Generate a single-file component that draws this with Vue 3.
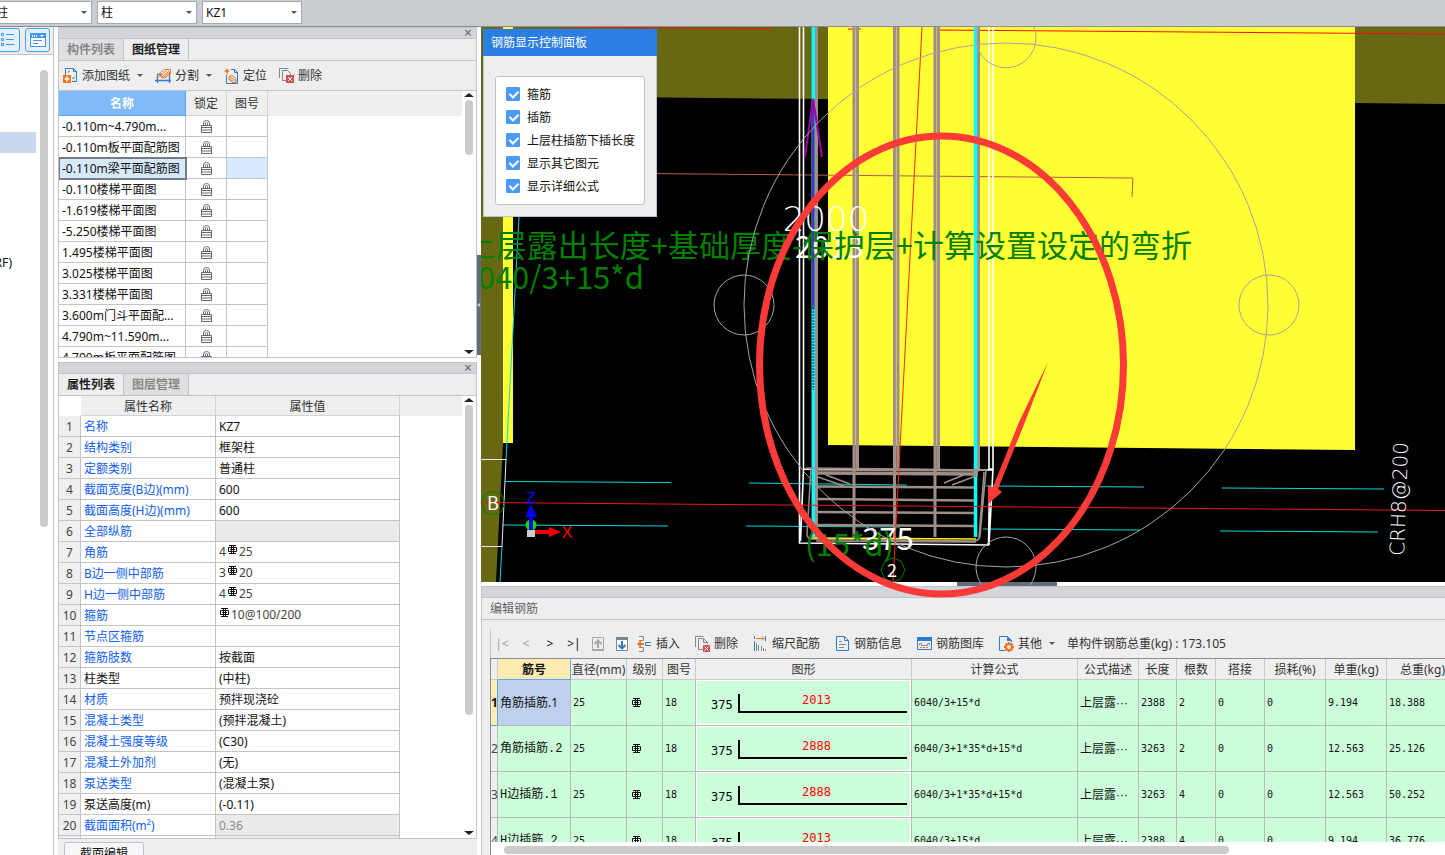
<template>
    <div class="app">
        <header class="topbar">
            <div class="combo" v-for="c in combos" :key="c.label">
                <select :aria-label="c.label">
                    <option>{{ c.value }}</option>
                </select>
                <i class="caret"></i>
            </div>
        </header>
        <div class="main">
            <aside class="sidebar">
                <div class="side-tools">
                    <button class="side-btn" aria-label="列表">
                        <svg width="14" height="14" viewBox="0 0 14 14" fill="none" stroke="#3f97ee">
                            <path d="M.5 .5h2v2h-2zM.5 5.5h2v2h-2zM.5 10.5h2v2h-2zM5 1.5h8M5 6.5h8M5 11.5h8" />
                        </svg>
                    </button>
                    <button class="side-btn" aria-label="视图">
                        <svg width="16" height="14" viewBox="0 0 16 14">
                            <path fill="#3f97ee" d="M0 0h16v14H0z" />
                            <path fill="#fff" d="M2 2h1v2H2zM4 2h1v2H4zM6 2h1v2H6zM10 2h4l-2 2zM1 5h14v8H1z" />
                            <path fill="#3f97ee" d="M3 7h9v1H3zM3 10h5v1H3z" />
                        </svg>
                    </button>
                </div>
                <div class="tree-box">
                    <div class="tree">
                        <div class="tree-active"></div>
                        <div class="tree-item">(RF)</div>
                    </div>
                    <div class="thumb side-thumb"></div>
                </div>
            </aside>

            <section class="left">
                <div class="panel drawings">
                    <div class="grip"><button class="close" aria-label="关闭">×</button></div>
                    <div class="tabs">
                        <button class="tab">构件列表</button>
                        <button class="tab on">图纸管理</button>
                    </div>
                    <div class="tools">
                        <button class="tool">
                            <svg width="15" height="15" viewBox="0 0 15 15" fill="none">
                                <path stroke="#2f7bd0" d="M2.500 7V.5h8l3 3v10H9M10.500.5v3h3" />
                                <path stroke="#8a949c" d="M5 5V3.500h2M11 8.500v2H9" />
                                <path fill="#ee7420" d="M0 7h8v8H0z" />
                                <path stroke="#fff" stroke-width="1.500" d="M4 8.500v5M1.500 11h5" />
                            </svg>添加图纸<i class="caret"></i>
                        </button>
                        <button class="tool">
                            <svg width="16" height="15" viewBox="0 0 16 15" fill="none">
                                <path stroke="#2f7bd0" stroke-width="1.300" d="M2.500 7v8M14.500 5v10M0 12.500h16M2 6.500h5" />
                                <path stroke="#ee7420" d="M1.500 9.500l4-5 4-3h6v4l-6 5M4 9l7-6M6 10l8-7M8 10l7-6M5 8l3 2" />
                            </svg>分割<i class="caret"></i>
                        </button>
                        <button class="tool">
                            <svg width="15" height="16" viewBox="0 0 15 16" fill="none">
                                <path stroke="#2f7bd0" d="M2.500 7v8.500h11V4.500l-3-3H7M10.500 1.500v3h3" />
                                <path fill="#ee7420" d="M3 0l1 2 2 1-2 1-1 3-1-3-2-1 2-1z" />
                                <path stroke="#ee7420" d="M5 8.500l3-1 4 3v4H8l-3-3zM6 9l6 4M5 11l4 2" />
                            </svg>定位
                        </button>
                        <button class="tool">
                            <svg width="15" height="15" viewBox="0 0 15 15" fill="none">
                                <path stroke="#808a93" d="M.5 10V.5h9M3.500 12.500v-10h5l3 3V7M3.500 12.500H7" />
                                <path fill="#d55252" d="M7 7h8v8H7z" />
                                <path stroke="#fff" d="M9 9l4 4M13 9l-4 4" />
                            </svg>删除
                        </button>
                    </div>
                    <div class="scroll-area">
                        <div class="grid-box">
                            <table class="grid draw-grid">
                                <colgroup><col class="c-name"><col class="c-lock"><col class="c-lock"></colgroup>
                                <thead>
                                    <tr><th class="sorted">名称</th><th>锁定</th><th>图号</th></tr>
                                </thead>
                                <tbody>
                                    <tr v-for="(d, i) in drawings" :key="d" :class="{ picked: i === 2 }">
                                        <td>{{ d }}</td>
                                        <td class="lock">
                                            <svg width="11" height="13" viewBox="0 0 11 13" fill="none" stroke="#666a70">
                                                <path d="M2.500 5V3q0-2.500 3-2.500T8.500 3v2M4.500 5V3.500q0-1 1-1t1 1V5" />
                                                <path d="M.5 5.500h10v7H.5zM1 7.500h9M1 10h9" />
                                            </svg>
                                        </td>
                                        <td></td>
                                    </tr>
                                </tbody>
                            </table>
                        </div>
                        <div class="vbar">
                            <i class="up"></i>
                            <div class="thumb short"></div>
                            <i class="down"></i>
                        </div>
                    </div>
                </div>

                <div class="panel props">
                    <div class="grip"><button class="close" aria-label="关闭">×</button></div>
                    <div class="tabs">
                        <button class="tab on">属性列表</button>
                        <button class="tab">图层管理</button>
                    </div>
                    <div class="scroll-area">
                        <div class="grid-box">
                            <table class="grid prop-grid">
                                <colgroup><col class="c-no"><col class="c-key"><col class="c-val"></colgroup>
                                <thead>
                                    <tr><th class="corner"></th><th>属性名称</th><th>属性值</th></tr>
                                </thead>
                                <tbody>
                                    <tr v-for="(p, i) in props" :key="i">
                                        <td class="no">{{ p[0] ? i + 1 : '' }}</td>
                                        <td :class="p[2] === 'plain' ? '' : 'link'">{{ p[0] }}</td>
                                        <td :class="p[2]">
                                            <span v-if="p[2] === 'bar'" class="rebar">{{ p[1][0] }}<svg width="11" height="10" viewBox="0 0 11 10" fill="none" stroke="#111">
                                                <path d="M4.500 0v9M6.500 0v9M2 .5h7M2 8.500h7M1.500 2.500h8v4h-8zM3 4.500h5" />
                                            </svg>{{ p[1][1] }}</span>
                                            <template v-else>{{ p[1] }}</template>
                                        </td>
                                    </tr>
                                </tbody>
                            </table>
                        </div>
                        <div class="vbar">
                            <i class="up"></i>
                            <div class="thumb long"></div>
                            <i class="down"></i>
                        </div>
                    </div>
                </div>
                <div class="foot"><button class="foot-btn">截面编辑</button></div>
            </section>

            <div class="vsplit"><div class="vsplit-handle"><i></i></div></div>

            <section class="right">
                <div class="canvas">
                    <svg class="cad" viewBox="481 27 964 555" preserveAspectRatio="xMinYMin slice" fill="none">
                        <!-- slabs -->
                        <path fill="#686814" d="M481 27h347v72L503 96v347l-7 139h-15zM1355 27h90v77l-90-1z" />
                        <path fill="#ffff33" d="M503 27h10v416h-10zM828 27h527v423l-527-5z" />
                        <!-- axis lines -->
                        <path stroke="#f01010" d="M560 27l212 2M848 29h13M937 30l508 4" />
                        <path stroke="#b85a50" d="M481 172l652 6-1 19" />
                        <path stroke="#00d8dc" d="M519 217l-13 243M502 546l-2 36M505 481.500l166 1M503 525l165 1M749 483l158 2M746 526l154 1M986 486l158 1M983 529l157 1M1222 488l162 1M1220 531l158 1" />
                        <path stroke="#e8e8e8" d="M481 459.500h25l-4 87h-21" />
                        <!-- column outline -->
                        <path stroke="#fff" stroke-width="1.600" d="M799.500 27v516l189 2 1-59M803.500 27v442l-3 72M989 27v442h4M993 27v442l-4 76M803 469l190 1" />
                        <!-- main bars -->
                        <path stroke="#9f8d87" stroke-width="3" d="M816.500 27v512M854 27v510M857.500 27v442M894.500 27v512M898 27v442M935 27v510M938.500 27v442M978.500 27v442" />
                        <path stroke="#c9b59a" stroke-width=".6" d="M855.700 27v442M896.200 27v442M936.700 27v442" />
                        <path stroke="#00ffff" stroke-width="3.500" d="M813.300 27v510M975.500 27v510" />
                        <path stroke="#5a28b0" stroke-width="2.500" d="M813.300 99v210" />
                        <path stroke="#286ab4" stroke-width="2" stroke-dasharray="2 1" d="M813.300 305v85" />
                        <!-- stirrups -->
                        <path stroke="#9f8d87" stroke-width="3.500" d="M816 473l162 1" />
                        <path stroke="#9f8d87" stroke-width="2.500" d="M816 486.500l158 1M816 499l158 1.500M816 512l158 1M816 525l158 1" />
                        <path stroke="#9f8d87" stroke-width="1.500" d="M806 468l180 2-6 66q-1 5-6 5l-163-2q-4-1-4-5l4-66M818 477l26 9M826 475l24 9M944 483l22-9M952 485l24-9M984 472l-5 66M817 470l162 1M816 541l160 1" />
                        <path stroke="#ffee22" stroke-width="1.500" d="M811 538l165 1" />
                        <path stroke="#a000a8" stroke-width="2" d="M805 157l8-58 9 58" />
                        <path stroke="#e81818" d="M481 502.500l964 8" />
                        <path stroke="#ff2810" d="M922 27l-29 555" />
                        <!-- labels -->
                        <text class="thin" x="826" y="231" text-anchor="middle">2000</text>
                        <text class="cad-text white" x="795" y="258">2013</text>
                        <text class="cad-text green" x="1192" y="257" text-anchor="end">上层露出长度+基础厚度-保护层+计算设置设定的弯折</text>
                        <text class="cad-text green" x="644" y="289" text-anchor="end">6040/3+15*d</text>
                        <text class="cad-text white" x="862" y="550">375</text>
                        <text class="cad-text green" x="805" y="556">(15*d)</text>
                        <text class="thin vert" transform="translate(1404 556) rotate(-88)">CRH8@200</text>
                        <!-- grid bubbles -->
                        <path stroke="#008000" d="M493 491l8 3 4 9-4 9-8 3-8-3-4-9 4-9zM893 558l8 3 4 9-4 9-8 3-8-3-4-9 4-9z" />
                        <text class="bubble" x="493" y="510" text-anchor="middle">B</text>
                        <text class="bubble" x="892" y="577" text-anchor="middle">2</text>
                        <!-- axis gizmo -->
                        <circle cx="531" cy="525" r="5.500" fill="#00e000" />
                        <path fill="#0000f0" d="M531 504l6 13h-4v13h-4v-13h-4z" />
                        <path fill="#f00000" d="M561 532l-12 5v-3h-15v-4h15v-3z" />
                        <path fill="#ccc" d="M527 530h8v7h-8z" />
                        <text class="axis blue" x="531" y="504" text-anchor="middle">Z</text>
                        <text class="axis red" x="567" y="538" text-anchor="middle">X</text>
                    </svg>
                    <svg class="cad over" viewBox="481 27 964 555" preserveAspectRatio="xMinYMin slice" fill="none">
                        <g stroke="#a4a4a4">
                            <circle cx="1006" cy="305" r="262" />
                            <circle cx="744" cy="305" r="30" />
                            <circle cx="1269" cy="305" r="30" />
                            <path d="M978 27a30 30 0 1 0 56 0" />
                            <path d="M982 585a30 30 0 1 1 48 0" />
                        </g>
                        <ellipse cx="941.500" cy="365" rx="182" ry="229" stroke="#fc3a38" stroke-width="7" />
                        <path fill="#fc3a38" d="M1048 362l-29 60-26 65-5-1v18l14-12-4-3 27-67z" />
                    </svg>
                    <div class="dialog">
                        <div class="dialog-title">钢筋显示控制面板</div>
                        <div class="dialog-body">
                            <div class="checks">
                                <label v-for="c in checks" :key="c.label"><input type="checkbox" v-model="c.on">{{ c.label }}</label>
                            </div>
                        </div>
                    </div>
                </div>

                <div class="hsplit"><div class="hsplit-handle"></div></div>

                <div class="editor">
                    <div class="grip"></div>
                    <div class="editor-title">编辑钢筋</div>
                    <div class="editor-tools">
                        <button class="nav dim">|&lt;</button>
                        <button class="nav dim">&lt;</button>
                        <button class="nav">&gt;</button>
                        <button class="nav">&gt;|</button>
                        <button class="nav" aria-label="上移">
                            <svg width="12" height="14" viewBox="0 0 12 14" fill="none" stroke="#a9a9a9">
                                <path d="M.5 .5h11v13H.5zM0 12.500h12" /><path stroke-width="2" d="M6 11V4M2.500 7L6 3.500 9.500 7" />
                            </svg>
                        </button>
                        <button class="nav" aria-label="下移">
                            <svg width="12" height="14" viewBox="0 0 12 14" fill="none">
                                <path fill="#fff" stroke="#7b858f" d="M.5 .5h11v13H.5z" />
                                <path fill="#7b858f" d="M0 0h12v3H0z" />
                                <path stroke="#2f7bd0" stroke-width="2" d="M6 4v7M2.500 8L6 11.500 9.500 8" />
                            </svg>
                        </button>
                        <div class="editor-btns">
                            <button class="tool">
                                <svg width="15" height="16" viewBox="0 0 15 16" fill="none">
                                    <path stroke="#808a93" d="M2 .5h4.500v4H2M2 15.500h4.500v-4H2" />
                                    <path stroke="#2f7bd0" d="M14 6.500H8.500v3H14" />
                                    <path fill="#ee7420" d="M0 8l4-4v3h3v2H4v3z" />
                                </svg>插入
                            </button>
                            <button class="tool">
                                <svg width="15" height="16" viewBox="0 0 15 16" fill="none">
                                    <path stroke="#808a93" d="M.5 11V.5h8M3.500 13.500v-11h5l4 4V8M3.500 13.500H8M8.500 3v3.500h4" />
                                    <path fill="#d55252" d="M8 9h7v7H8z" />
                                    <path stroke="#fff" d="M9.500 10.500l4 4M13.500 10.500l-4 4" />
                                </svg>删除
                            </button>
                            <button class="tool">
                                <svg width="15" height="16" viewBox="0 0 15 16" fill="none">
                                    <path stroke="#2f7bd0" d="M1.500 0v3M1.500 5v10M12.500 0v5" />
                                    <path stroke="#ee7420" d="M3 2.500h8M9 .5l2 2-2 2" />
                                    <path stroke="#808a93" d="M3.500 7v8M5.500 9v6M8.500 10v5M10.500 12v3M12.500 13v2" />
                                </svg>缩尺配筋
                            </button>
                            <button class="tool">
                                <svg width="15" height="16" viewBox="0 0 15 16" fill="none">
                                    <path stroke="#2f7bd0" d="M1.500 .5h8l4 4v10h-12zM9.500 .5v4h4" />
                                    <path stroke="#808a93" d="M4 5.500h3M4 8.500h7M4 11.500h5" />
                                </svg>钢筋信息
                            </button>
                            <button class="tool">
                                <svg width="15" height="14" viewBox="0 0 15 14" fill="none">
                                    <path stroke="#2f7bd0" d="M.5 .5h14v12H.5z" />
                                    <path fill="#2f7bd0" d="M0 0h15v4H0z" />
                                    <path stroke="#808a93" d="M2.500 8.500v-2h2v2h6v-2h2v2" />
                                    <path stroke="#ee7420" stroke-dasharray="2 1" d="M3 10.500h9" />
                                </svg>钢筋图库
                            </button>
                            <button class="tool">
                                <svg width="15" height="16" viewBox="0 0 15 16" fill="none">
                                    <path stroke="#2f7bd0" d="M6 14.500H.5V.5h8l4 4V6" />
                                    <path fill="#2f7bd0" d="M8 0l5 5H8z" />
                                    <circle cx="10" cy="11" r="3" stroke="#ee7420" stroke-width="2" />
                                    <path stroke="#ee7420" stroke-width="2" d="M10 6v2M10 14v2M5 11h2M13 11h2M6.500 7.500L8 9M12 13l1.500 1.500M13.500 7.500L12 9M8 13l-1.500 1.500" />
                                </svg>其他<i class="caret"></i>
                            </button>
                            <span class="total">单构件钢筋总重(kg) : 173.105</span>
                        </div>
                    </div>
                    <div class="sheet-box">
                        <div class="sheet-clip">
                            <table class="sheet">
                                <colgroup><col v-for="(w, i) in widths" :key="i" :style="{ width: w + 'px' }"></colgroup>
                                <thead>
                                    <tr>
                                        <th v-for="(h, i) in heads" :key="i" :class="{ current: i === 1 }">{{ h }}</th>
                                    </tr>
                                </thead>
                                <tbody>
                                    <tr v-for="(r, i) in rows" :key="i" :class="{ active: i === 0 }">
                                        <td class="idx">{{ i + 1 }}</td>
                                        <td class="bar-name">{{ r.name }}</td>
                                        <td>25</td>
                                        <td>
                                            <svg width="11" height="10" viewBox="0 0 11 10" fill="none" stroke="#111">
                                                <path d="M4.500 0v9M6.500 0v9M2 .5h7M2 8.500h7M1.500 2.500h8v4h-8zM3 4.500h5" />
                                            </svg>
                                        </td>
                                        <td>18</td>
                                        <td class="shape">
                                            <svg width="215" height="45" viewBox="0 0 213 43">
                                                <path fill="none" stroke="#000" stroke-width="2" d="M42 13v18h168" />
                                                <text x="14" y="28">375</text>
                                                <text class="len" x="105" y="23">{{ r.bend }}</text>
                                            </svg>
                                        </td>
                                        <td>{{ r.formula }}</td>
                                        <td class="desc">上层露···</td>
                                        <td>{{ r.len }}</td>
                                        <td>{{ r.n }}</td>
                                        <td>0</td>
                                        <td>0</td>
                                        <td>{{ r.unit }}</td>
                                        <td>{{ r.sum }}</td>
                                    </tr>
                                </tbody>
                            </table>
                        </div>
                        <div class="hbar"><div class="thumb hthumb"></div></div>
                    </div>
                </div>
            </section>
        </div>
    </div>
</template>

<script setup>
    import { ref } from 'vue';

    const combos = [
        { label: '构件大类', value: '柱' },
        { label: '构件类型', value: '柱' },
        { label: '构件', value: 'KZ1' },
    ]

    const drawings = [
        '-0.110m~4.790m...', '-0.110m板平面配筋图', '-0.110m梁平面配筋图', '-0.110楼梯平面图',
        '-1.619楼梯平面图', '-5.250楼梯平面图', '1.495楼梯平面图', '3.025楼梯平面图',
        '3.331楼梯平面图', '3.600m门斗平面配...', '4.790m~11.590m...', '4.790m板平面配筋图',
    ]

    // [属性名称, 属性值, 样式]
    const props = [
        ['名称', 'KZ7'],
        ['结构类别', '框架柱'],
        ['定额类别', '普通柱'],
        ['截面宽度(B边)(mm)', '600'],
        ['截面高度(H边)(mm)', '600'],
        ['全部纵筋', '', 'off'],
        ['角筋', ['4', '25'], 'bar'],
        ['B边一侧中部筋', ['3', '20'], 'bar'],
        ['H边一侧中部筋', ['4', '25'], 'bar'],
        ['箍筋', ['', '10@100/200'], 'bar'],
        ['节点区箍筋', ''],
        ['箍筋肢数', '按截面'],
        ['柱类型', '(中柱)', 'plain'],
        ['材质', '预拌现浇砼'],
        ['混凝土类型', '(预拌混凝土)'],
        ['混凝土强度等级', '(C30)'],
        ['混凝土外加剂', '(无)'],
        ['泵送类型', '(混凝土泵)'],
        ['泵送高度(m)', '(-0.11)', 'plain'],
        ['截面面积(m²)', '0.36', 'off'],
        ['', '', 'off'],
    ]

    const checks = ref([
        { label: '箍筋', on: true },
        { label: '插筋', on: true },
        { label: '上层柱插筋下插长度', on: true },
        { label: '显示其它图元', on: true },
        { label: '显示详细公式', on: true },
    ])

    const heads = ['', '筋号', '直径(mm)', '级别', '图号', '图形', '计算公式', '公式描述', '长度', '根数', '搭接', '损耗(%)', '单重(kg)', '总重(kg)']
    const widths = [7, 73, 56, 36, 33, 216, 166, 61, 38, 39, 49, 61, 61, 72]
    const rows = [
        { name: '角筋插筋.1', bend: 2013, formula: '6040/3+15*d', len: 2388, n: 2, unit: '9.194', sum: '18.388' },
        { name: '角筋插筋.2', bend: 2888, formula: '6040/3+1*35*d+15*d', len: 3263, n: 2, unit: '12.563', sum: '25.126' },
        { name: 'H边插筋.1', bend: 2888, formula: '6040/3+1*35*d+15*d', len: 3263, n: 4, unit: '12.563', sum: '50.252' },
        { name: 'H边插筋.2', bend: 2013, formula: '6040/3+15*d', len: 2388, n: 4, unit: '9.194', sum: '36.776' },
    ]
</script>

<style>
    body {
        margin: 0;
        overflow: hidden;
    }
</style>

<style scoped>
    * {
        box-sizing: border-box;
    }

    .app {
        height: 100vh;
        display: flex;
        flex-direction: column;
        overflow: hidden;
        background: #fff;
        color: #111;
        font: 12px/16px "Noto Sans", "Noto Sans CJK SC", sans-serif;
    }

    button, select, input {
        font: inherit;
        color: inherit;
        margin: 0;
        padding: 0;
        border: 0;
        background: none;
    }

    svg {
        flex: none;
    }

    .caret {
        border: 3px solid transparent;
        border-top-color: #555;
        border-bottom: 0;
    }

    /* 顶部 */
    .topbar {
        flex: none;
        height: 27px;
        display: flex;
        gap: 5px;
        padding: 1px 0;
        background: #c9ccd1;
        border-bottom: 1px solid #8b8e96;
    }

    .combo {
        position: relative;
        width: 100px;
        height: 23px;
    }

    .combo:first-child {
        margin-left: -8px;
    }

    .combo select {
        appearance: none;
        width: 100%;
        height: 100%;
        padding: 0 3px;
        border: 1px solid #a5a8ad;
        background: #fff;
    }

    .combo .caret {
        position: absolute;
        right: 5px;
        top: 10px;
    }

    .main {
        flex: 1;
        min-height: 0;
        display: flex;
    }

    /* 侧栏 */
    .sidebar {
        flex: none;
        width: 54px;
        display: flex;
        flex-direction: column;
        overflow: hidden;
        border-right: 1px solid #c2c4ca;
    }

    .side-tools {
        display: flex;
        gap: 5px;
        height: 28px;
        padding-top: 1px;
        margin-left: -5px;
        background: #eee;
        border-bottom: 1px solid #c2c4ca;
    }

    .side-btn {
        width: 25px;
        height: 24px;
        display: flex;
        flex: none;
        align-items: center;
        justify-content: center;
        border: 1px solid #4a9fee;
        border-radius: 3px;
        background: #e4f0fc;
    }

    .tree-box {
        flex: 1;
        display: flex;
        gap: 4px;
    }

    .tree {
        width: 36px;
        padding-top: 77px;
    }

    .tree-active {
        height: 21px;
        background: #c8d8ef;
        margin-bottom: 102px;
    }

    .tree-item {
        width: 12px;
        display: flex;
        justify-content: flex-end;
    }

    .thumb {
        background: #cbcbcb;
        border-radius: 4px;
    }

    .side-thumb {
        width: 8px;
        height: 457px;
        margin-top: 15px;
    }

    /* 左侧面板 */
    .left {
        flex: none;
        width: 419px;
        margin-left: 4px;
        display: flex;
        flex-direction: column;
    }

    .panel {
        display: flex;
        flex-direction: column;
        border: 1px solid #c2c4ca;
    }

    .drawings {
        flex: none;
        height: 331px;
        margin-bottom: 4px;
    }

    .props {
        flex: 1;
        min-height: 0;
    }

    .grip {
        flex: none;
        height: 11px;
        display: flex;
        align-items: center;
        justify-content: flex-end;
        background: #d3d5da;
        border-bottom: 1px solid #c2c4ca;
    }

    .close {
        width: 16px;
        line-height: 10px;
        font-size: 14px;
        color: #666;
    }

    .tabs {
        flex: none;
        height: 22px;
        display: flex;
        background: #eee;
        border-bottom: 1px solid #c2c4ca;
    }

    .tab {
        width: 65px;
        font-weight: 700;
        color: #888;
        background: #dfdfdf;
        border-right: 1px solid #c2c4ca;
    }

    .tab.on {
        color: #222;
        background: #eee;
    }

    .tools {
        flex: none;
        height: 30px;
        display: flex;
        align-items: center;
        gap: 12px;
        padding-left: 4px;
        background: #eee;
        border-bottom: 1px solid #c2c4ca;
    }

    .tool {
        display: flex;
        align-items: center;
        gap: 4px;
        color: #333;
        white-space: nowrap;
    }

    .tool .caret {
        margin-left: 3px;
    }

    .scroll-area {
        flex: 1;
        min-height: 0;
        display: flex;
    }

    .grid-box {
        flex: 1;
        overflow: hidden;
        background: linear-gradient(#efefef 25px, #fff 25px);
    }

    .props .grid-box {
        background: linear-gradient(#efefef 20px, #fff 20px);
    }

    .vbar {
        width: 14px;
        flex: none;
        display: flex;
        flex-direction: column;
        align-items: center;
        padding: 2px 0 3px;
    }

    .up, .down {
        border: 5px solid transparent;
    }

    .up {
        border-top: 0;
        border-bottom: 4px solid #222;
        margin-bottom: 3px;
    }

    .down {
        border-bottom: 0;
        border-top: 4px solid #222;
        margin-top: auto;
    }

    .short, .long {
        width: 8px;
        height: 21%;
    }

    .long {
        height: 71%;
    }

    .grid {
        table-layout: fixed;
        border-collapse: separate;
        border-spacing: 0;
    }

    .draw-grid {
        width: 209px;
    }

    .prop-grid {
        width: 341px;
    }

    .c-name {
        width: 127px;
    }

    .c-lock {
        width: 41px;
    }

    .c-no {
        width: 22px;
    }

    .c-key {
        width: 135px;
    }

    .c-val {
        width: 184px;
    }

    .grid th {
        height: 25px;
        padding: 2px 0 0;
        font-weight: 400;
        color: #333;
        background: #efefef;
        border-right: 1px solid #d2d3d8;
        border-bottom: 1px solid #d2d3d8;
    }

    .prop-grid th {
        height: 20px;
    }

    .grid th.corner {
        background: #fff;
        border-color: #fff;
    }

    .grid th.sorted {
        color: #fff;
        font-weight: 700;
        background: #80baf9;
        border-color: #5fa4ec;
    }

    .grid td {
        height: 21px;
        padding: 2px 3px 0;
        white-space: nowrap;
        overflow: hidden;
        background: #fff;
        border-right: 1px solid #c2c4ca;
        border-bottom: 1px solid #c2c4ca;
    }

    .grid td.lock {
        padding: 0;
    }

    .lock svg {
        display: block;
        margin: 0 auto;
    }

    .picked td:first-child {
        background: #d6e9fd;
        outline: 2px solid #777b82;
        outline-offset: -1px;
    }

    .picked td:last-child {
        background: #d6e9fd;
    }

    .grid td.no {
        text-align: center;
        padding: 2px 0 0;
        color: #444;
        background: #efefef;
    }

    .grid td.link {
        color: #0f5df2;
    }

    .grid td.off {
        color: #8c8c8c;
        background: #eaeaea;
    }

    .grid td.bar {
        padding-top: 0;
    }

    .rebar {
        display: flex;
        align-items: center;
        gap: 1px;
        color: #444;
    }

    .rebar svg {
        margin-bottom: 4px;
    }

    .foot {
        flex: none;
        height: 16px;
        padding: 3px 6px 0;
        overflow: hidden;
        background: #eee;
    }

    .foot-btn {
        width: 80px;
        height: 24px;
        border: 1px solid #b9c3d3;
        border-radius: 2px;
        background: #f8f8f8;
    }

    .vsplit {
        flex: none;
        width: 4px;
        padding-top: 228px;
    }

    .vsplit-handle {
        height: 100px;
        display: flex;
        align-items: center;
        background: #626d78;
    }

    .vsplit-handle i {
        border: 2px solid transparent;
        border-left: 0;
        border-right: 3px solid #ccc;
    }

    /* 绘图区 */
    .right {
        flex: 1;
        min-width: 0;
        display: flex;
        flex-direction: column;
    }

    .canvas {
        position: relative;
        flex: 1;
        min-height: 0;
        background: #000;
    }

    .cad {
        position: absolute;
        left: 0;
        top: 0;
        width: 100%;
        height: 100%;
    }

    .over {
        overflow: visible;
        z-index: 2;
        pointer-events: none;
    }

    .cad-text {
        font: 31px "Noto Sans CJK SC", sans-serif;
    }

    .green {
        fill: #008000;
    }

    .white {
        fill: #fff;
    }

    .thin {
        font: 200 34px "DejaVu Sans", sans-serif;
        fill: #fff;
    }

    .vert {
        font-size: 20px;
    }

    .bubble {
        font: 18px "Noto Sans CJK SC", sans-serif;
        fill: #fff;
    }

    .axis {
        font: 16px "Liberation Sans", sans-serif;
    }

    .blue {
        fill: #0000ff;
    }

    .red {
        fill: #ff0000;
    }

    .dialog {
        position: absolute;
        z-index: 3;
        left: 2px;
        top: 2px;
        width: 174px;
        background: #eee;
        border: 1px solid #b4c2d6;
        border-top: 0;
    }

    .dialog-title {
        margin: 0 -1px;
        padding: 0 8px;
        line-height: 27px;
        color: #fff;
        background: #2c7fe2;
    }

    .dialog-body {
        padding: 20px 11px 11px;
    }

    .checks {
        padding: 6px 8px 6px 10px;
        border: 1px solid #bfc2c8;
        border-radius: 3px;
        background: #fff;
    }

    .checks label {
        display: flex;
        align-items: center;
        gap: 7px;
        height: 23px;
        white-space: nowrap;
    }

    .checks input {
        appearance: none;
        position: relative;
        flex: none;
        width: 14px;
        height: 14px;
        margin-bottom: 1px;
        border-radius: 1px;
        border: 1px solid #4b9bf5;
    }

    .checks input:checked {
        background: #4b9bf5;
    }

    .checks input:checked::after {
        content: "";
        position: absolute;
        left: 4px;
        top: 1px;
        width: 4px;
        height: 7px;
        border: solid #fff;
        border-width: 0 2px 2px 0;
        transform: rotate(45deg);
    }

    .hsplit {
        flex: none;
        height: 4px;
    }

    .hsplit-handle {
        width: 100px;
        height: 4px;
        margin-left: 476px;
        background: #626d78;
    }

    /* 钢筋编辑 */
    .editor {
        flex: none;
        height: 269px;
        display: flex;
        flex-direction: column;
        background: #eee;
        border: 1px solid #c2c4ca;
        border-right: 0;
        border-bottom: 0;
    }

    .editor-title {
        flex: none;
        padding: 0 8px;
        line-height: 21px;
        color: #666;
        border-bottom: 1px solid #c2c4ca;
    }

    .editor-tools {
        flex: none;
        display: flex;
        align-items: center;
        height: 29px;
        margin: 9px 0 0 8px;
        box-shadow: inset 1px 0 #c2c4ca;
    }

    .nav {
        width: 24px;
        height: 16px;
        display: flex;
        align-items: center;
        justify-content: center;
    }

    .nav.dim {
        color: #a0a0a0;
    }

    .editor-btns {
        display: flex;
        align-items: center;
        gap: 15px;
        margin-left: 3px;
        white-space: nowrap;
    }

    .total {
        color: #333;
        margin-left: -3px;
    }

    .sheet-box {
        flex: 1;
        min-height: 0;
        display: flex;
        flex-direction: column;
        margin-left: 8px;
        border-left: 1px solid #8a8b98;
        border-top: 1px solid #8a8b98;
        background: #fff;
    }

    .sheet-clip {
        flex: 1;
        min-height: 0;
        overflow: hidden;
    }

    .sheet {
        width: 968px;
        table-layout: fixed;
        border-collapse: separate;
        border-spacing: 0;
    }

    .sheet th {
        height: 21px;
        padding: 2px 0 0;
        font-weight: 400;
        white-space: nowrap;
        color: #333;
        background: #efefef;
        border-right: 1px solid #c9cacf;
        border-bottom: 1px solid #c9cacf;
    }

    .sheet th.current {
        font-weight: 700;
        color: #111;
        background: #ffecb2;
        border-color: #5fa4ec;
    }

    .sheet td {
        height: 46px;
        padding: 0 2px;
        font: 10px/16px "DejaVu Sans Mono", "Noto Sans CJK SC", monospace;
        white-space: nowrap;
        background: #ccffd9;
        border-right: 1px solid #b9b9b9;
        border-bottom: 1px solid #b9b9b9;
    }

    .sheet td svg {
        display: block;
        margin-left: 2px;
    }

    .sheet td.idx {
        padding: 0;
        font: 12px/16px "Noto Sans", sans-serif;
        color: #444;
        background: #efefef;
    }

    .sheet td.bar-name {
        font: 12px/16px "Liberation Mono", "Noto Sans CJK SC", monospace;
    }

    .sheet .active td.idx {
        font-weight: 700;
        color: #111;
        background: #ffecb2;
        border-color: #5fa4ec;
    }

    .sheet .active td.bar-name {
        font-family: "Noto Sans", "Noto Sans CJK SC", sans-serif;
        background: #bfd0ef;
    }

    .sheet td.desc {
        font: 12px/16px "Liberation Sans", "Noto Sans CJK SC", sans-serif;
    }

    .sheet td.shape {
        padding: 0;
    }

    .sheet td.shape svg {
        margin: 0 auto;
        border: 1px solid #fff;
    }

    .shape text {
        font: 12px "DejaVu Sans Mono", monospace;
    }

    .shape .len {
        fill: #f00;
    }

    .hbar {
        flex: none;
        height: 13px;
        padding: 4px 0 1px 13px;
        background: #fff;
    }

    .hthumb {
        width: 77%;
        height: 8px;
    }
</style>
